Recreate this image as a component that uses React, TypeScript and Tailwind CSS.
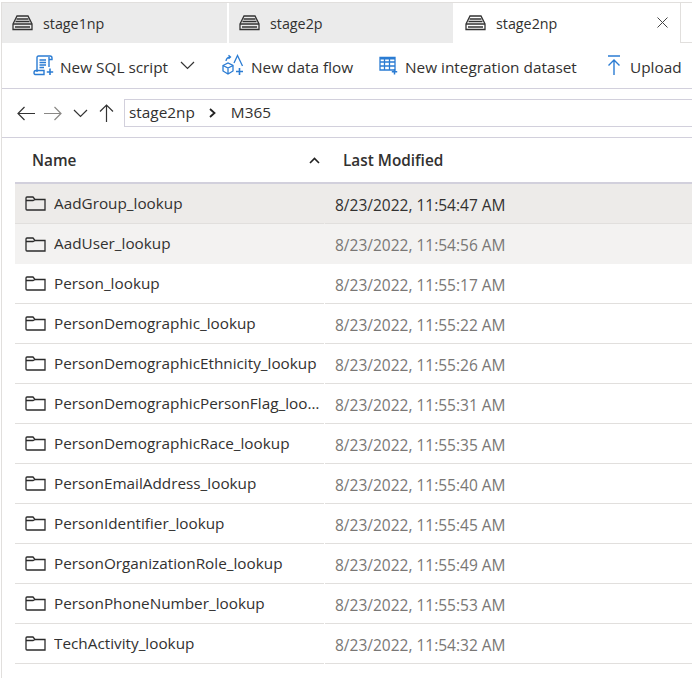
import { FC } from "react";

const rows = [
  ["AadGroup_lookup", "8/23/2022, 11:54:47 AM"],
  ["AadUser_lookup", "8/23/2022, 11:54:56 AM"],
  ["Person_lookup", "8/23/2022, 11:55:17 AM"],
  ["PersonDemographic_lookup", "8/23/2022, 11:55:22 AM"],
  ["PersonDemographicEthnicity_lookup", "8/23/2022, 11:55:26 AM"],
  ["PersonDemographicPersonFlag_lookup", "8/23/2022, 11:55:31 AM"],
  ["PersonDemographicRace_lookup", "8/23/2022, 11:55:35 AM"],
  ["PersonEmailAddress_lookup", "8/23/2022, 11:55:40 AM"],
  ["PersonIdentifier_lookup", "8/23/2022, 11:55:45 AM"],
  ["PersonOrganizationRole_lookup", "8/23/2022, 11:55:49 AM"],
  ["PersonPhoneNumber_lookup", "8/23/2022, 11:55:53 AM"],
  ["TechActivity_lookup", "8/23/2022, 11:54:32 AM"],
];

const StorageIcon = () => (
  <svg width="21" height="16" viewBox="0 0 21 16" fill="none" stroke="#333" strokeWidth="1.3">
    <path d="M1 9 L5 1 H16 L20 9 V14.5 H1 Z" />
    <path d="M1 9 H20 M4.5 4 H16.5 M3.5 6.5 H17.5" />
    <path d="M3 12 H18" strokeWidth="1.5" />
  </svg>
);

const FolderIcon = () => (
  <svg width="21" height="15" viewBox="0 0 21 15" fill="none" stroke="#2b2b2b" strokeWidth="1.3">
    <path d="M1 13 V2 Q1 1 2 1 H8 L10 3.5 H20 V14 H2 Q1 14 1 13 Z" />
    <path d="M1 4.5 H8 L10 3.5" />
  </svg>
);

const Tab: FC<{ label: string; active?: boolean; width: string }> = ({ label, active, width }) => (
  <div className={`${width} flex items-center shrink-0 h-full pl-[10px] ${active ? "bg-white border-r border-[#e1dfdd]" : "bg-[#ebebeb] border-r-2 border-white"}`}>
    <StorageIcon />
    <span className="ml-[10px] pt-[1px] text-[14.3px] text-[#323130]">{label}</span>
    {active && (
      <svg className="ml-auto mr-[12px] mb-[2px]" width="11" height="11" viewBox="0 0 11 11" stroke="#444" strokeWidth="1">
        <path d="M0.5 0.5 L10.5 10.5 M10.5 0.5 L0.5 10.5" />
      </svg>
    )}
  </div>
);

const SqlIcon = () => (
  <svg width="21" height="21" viewBox="0 0 21 21" fill="none" stroke="#2b7cd3" strokeWidth="1.4">
    <path d="M4 17 V2.5 Q4 1 5.5 1 H17 Q19 1 19 3 V4.5 H16 M16 12 V2" />
    <path d="M6.5 5 H13 M6.5 7.5 H13 M6.5 10 H13 M6.5 12.5 H11" />
    <path d="M1 18 Q1 15.5 3 15.5 H11 V19.5 H3 Q1 19.5 1 18 Z" />
    <path d="M17 13.5 V20 M13.8 17 H20.2" strokeWidth="1.6" />
  </svg>
);

const FlowIcon = () => (
  <svg width="22" height="22" viewBox="0 0 22 22" fill="none" stroke="#2b7cd3" strokeWidth="1.3">
    <path d="M1 11.5 L6 9 L11 11.5 V17 L6 20 L1 17 Z M1 11.5 L6 14 L11 11.5 M6 14 V20" />
    <path d="M4 7 Q4.5 3.5 8 3 M6.5 1.2 L8.5 3 L6.5 4.8" />
    <path d="M12 9 L15.5 1.5 L20.5 12" />
    <path d="M17.5 14 V21 M14 17.5 H21" strokeWidth="1.6" />
  </svg>
);

const DatasetIcon = () => (
  <svg width="19" height="19" viewBox="0 0 19 19" fill="none" stroke="#2b7cd3" strokeWidth="1.3">
    <path d="M1 1.5 H16 V14 H1 Z" />
    <path d="M1 2.5 H16" strokeWidth="2" />
    <path d="M1 6 H16 M1 10 H16 M5.5 2 V14 M10.5 2 V14" />
    <path d="M15.5 13 V18.5 M12.8 15.8 H18.2" strokeWidth="1.5" />
  </svg>
);

const UploadIcon = () => (
  <svg width="16" height="21" viewBox="0 0 16 21" fill="none" stroke="#2b7cd3" strokeWidth="1.4">
    <path d="M2 1 H14 M8 20 V5 M2.5 10.5 L8 5 L13.5 10.5" />
  </svg>
);

const NavArrow: FC<{ d: string; color?: string; w: number; h: number; className?: string }> = ({ d, color = "#333", w, h, className }) => (
  <svg className={className} width={w} height={h} viewBox={`0 0 ${w} ${h}`} fill="none" stroke={color} strokeWidth="1.2">
    <path d={d} />
  </svg>
);

const App: FC = () => (
  <div
    className="w-[692px] h-[678px] overflow-hidden bg-white pt-[2px] pl-[1px] text-[15.35px] text-[#323130]"
    style={{ fontFamily: '"Open Sans", "Noto Sans", sans-serif' }}
  >
    <div className="h-full border-l border-t border-[#e1dfdd]">
      <div className="flex h-[40px]">
        <Tab label="stage1np" width="w-[227px]" />
        <Tab label="stage2p" width="w-[226px]" />
        <Tab label="stage2np" width="w-[226px]" active />
        <div className="flex-1 border-b border-[#e1dfdd]" />
      </div>

      <div className="flex items-center h-[46px] border-b border-[#d2d0dc] pl-[31px] whitespace-nowrap">
        <SqlIcon />
        <span className="ml-[6px] pt-[4px] w-[109px]">New SQL script</span>
        <NavArrow className="ml-[11px]" d="M1 1 L7.5 7.5 L14 1" w={15} h={9} />
        <div className="ml-[27px] flex items-center">
          <FlowIcon />
          <span className="ml-[7px] pt-[4px] w-[102px]">New data flow</span>
        </div>
        <div className="ml-[26px] flex items-center">
          <DatasetIcon />
          <span className="ml-[7px] pt-[4px] w-[172px]">New integration dataset</span>
        </div>
        <div className="ml-[29px] flex items-center">
          <UploadIcon />
          <span className="ml-[8px] pt-[4px]">Upload</span>
        </div>
      </div>

      <div className="flex items-center h-[49px] border-b border-[#d2d0dc]">
        <div className="flex items-center w-[122px] pl-[15px]">
          <NavArrow d="M18 7.5 H1 M7.5 1 L1 7.5 L7.5 14" w={19} h={15} />
          <NavArrow className="ml-[8px]" d="M0 7.5 H17 M10.5 1 L17 7.5 L10.5 14" color="#8a8886" w={18} h={15} />
          <NavArrow className="ml-[11px]" d="M1 1 L7.5 7.5 L14 1" w={15} h={9} />
          <NavArrow className="ml-[11px]" d="M7.5 18 V1 M1 7.5 L7.5 1 L14 7.5" w={15} h={18} />
        </div>
        <div className="flex items-center flex-1 h-[28px] border border-r-0 border-[#d2d0dc] pl-[4px]">
          <span>stage2np</span>
          <svg className="ml-[14px] mr-[15px]" width="7" height="10" viewBox="0 0 7 10" fill="none" stroke="#222" strokeWidth="1.8">
            <path d="M1 1 L5.5 5 L1 9" />
          </svg>
          <span>M365</span>
        </div>
      </div>

      <div className="ml-[13px]">
        <div className="flex items-center h-[46px] border-b-2 border-[#d2d0dc] font-semibold">
          <div className="flex items-center w-[305px] pl-[17px] pt-[2px]">
            <span>Name</span>
            <svg className="ml-auto" width="11" height="7" viewBox="0 0 11 7" fill="none" stroke="#222" strokeWidth="1.6">
              <path d="M1 6 L5.5 1.5 L10 6" />
            </svg>
          </div>
          <span className="ml-[23px] pt-[2px]">Last Modified</span>
        </div>
        {rows.map(([name, modified], i) => (
          <div
            key={name}
            className={`flex h-[40px] ${i === 0 ? "bg-[#edebe9]" : i === 1 ? "bg-[#f3f2f1]" : "bg-white"}`}
          >
            <div className={`flex items-center w-[309px] pl-[10px] ${i === 1 ? "" : "border-b border-[#e1dfdd]"}`}>
              <FolderIcon />
              <span className="ml-[8px] w-[268px] truncate pb-[1px] text-[15.3px]">{name}</span>
            </div>
            <div className={`flex items-center flex-1 ml-[1px] pl-[10px] pt-[4px] text-[15.5px] ${i === 0 ? "text-[#323130]" : "text-[#797775]"} ${i === 1 ? "" : "border-b border-[#e1dfdd]"}`}>
              {modified}
            </div>
          </div>
        ))}
      </div>
    </div>
  </div>
);

export default App;
